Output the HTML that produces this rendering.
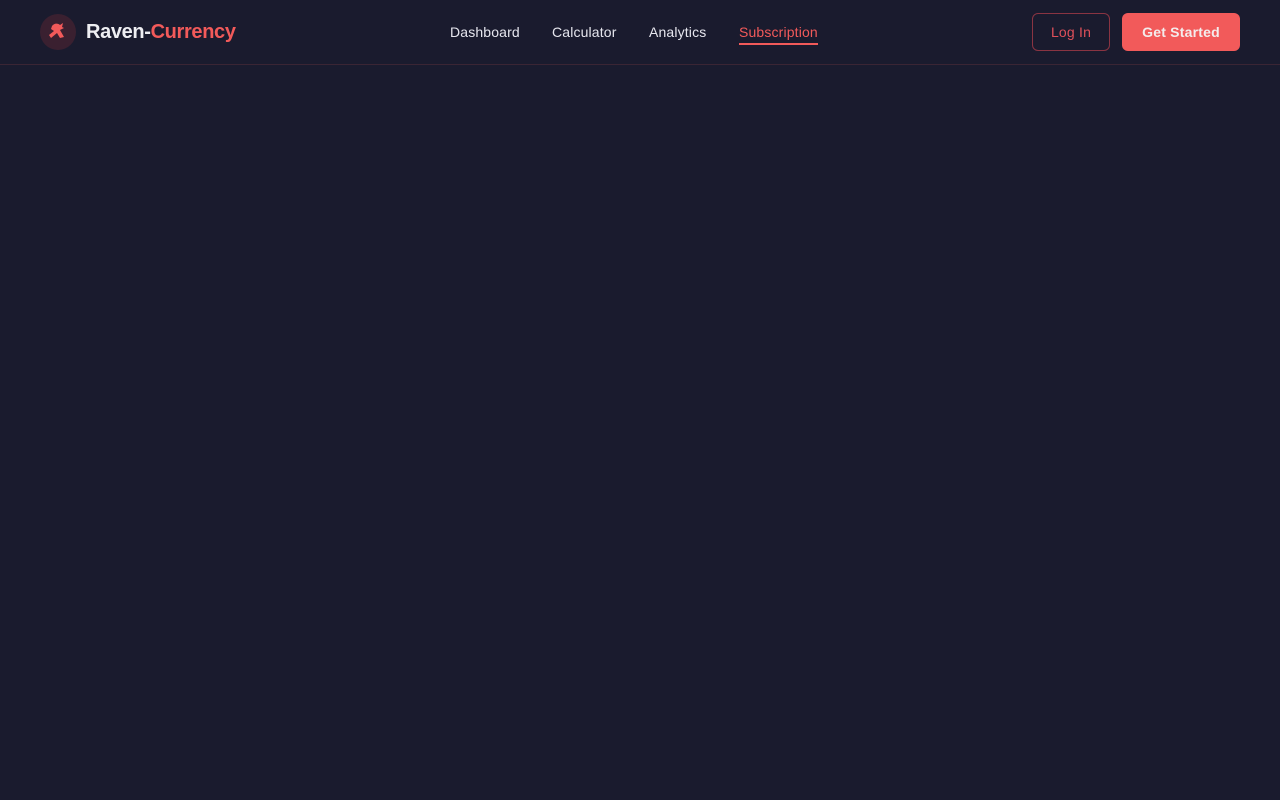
<!DOCTYPE html>
<html><head><style>
body{margin:0;background:#1a1b2e;font-family:"Liberation Sans",sans-serif;width:1280px;height:800px;overflow:hidden}
.nav{position:absolute;top:0;left:0;width:1280px;height:64px;border-bottom:1px solid #3a2534}
.logo{position:absolute;left:40px;top:14px;width:36px;height:36px;border-radius:50%;background:#3a2030}
.brand{position:absolute;left:86px;top:21px;font-size:20px;font-weight:bold;color:#eeeef2;letter-spacing:-0.35px}
.brand span{color:#f25a5a}
.links a{position:absolute;top:24px;font-size:14px;color:#e6e6ee;text-decoration:none;letter-spacing:0.15px}
.login{position:absolute;left:1032px;top:13px;width:76px;height:36px;border:1px solid #8a3442;border-radius:6px;color:#e0505a;font-size:14px;text-align:center;line-height:36px;letter-spacing:0.2px}
.gs{position:absolute;left:1122px;top:13px;width:118px;height:38px;background:#f25a5a;border-radius:6px;color:#f4ecec;font-size:14px;font-weight:bold;text-align:center;line-height:38px;letter-spacing:0.2px}
</style></head><body>
<div class="nav">
<div class="logo"><svg width="36" height="36" viewBox="0 0 36 36"><path d="M12 12c2-3 6-3 8-1l3-2-1 4 2 1-4 2 4 7-4 1-3-5-6 5-2-3 5-4-3-2z" fill="#f25a5a"/></svg></div>
<div class="brand">Raven-<span>Currency</span></div>
<div class="links">
<a style="left:450px">Dashboard</a>
<a style="left:552px">Calculator</a>
<a style="left:649px">Analytics</a>
<a style="left:739px;color:#f25a5a;border-bottom:2px solid #f25a5a;padding-bottom:3px">Subscription</a>
</div>
<div class="login">Log In</div>
<div class="gs">Get Started</div>
</div>
</body></html>
